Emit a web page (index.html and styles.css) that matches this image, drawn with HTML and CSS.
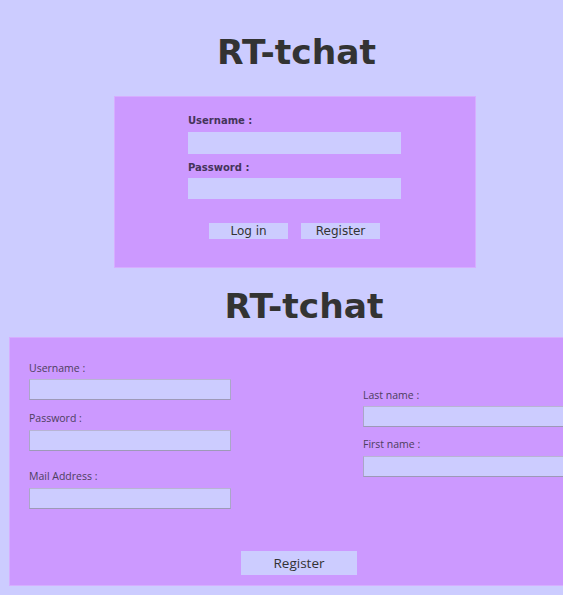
FILE: index.html
```html
<!DOCTYPE html>
<html>
<head>
<meta charset="utf-8">
<title>RT-tchat</title>
<link rel="stylesheet" href="styles.css">
</head>
<body>
<section class="login">
  <h1 class="title title-login">RT-tchat</h1>
  <div class="panel login-panel">
    <div class="login-fields">
      <label class="blabel">Username :</label>
      <div class="linput linput-a"></div>
      <label class="blabel blabel-b">Password :</label>
      <div class="linput linput-b"></div>
    </div>
    <div class="login-buttons">
      <button class="lbtn">Log in</button>
      <button class="lbtn">Register</button>
    </div>
  </div>
</section>
<section class="register">
  <h1 class="title title-reg">RT-tchat</h1>
  <div class="panel reg-panel">
    <div class="reg-grid">
      <div class="reg-col">
        <label class="rlabel">Username :</label>
        <div class="rinput"></div>
        <label class="rlabel rl-pass">Password :</label>
        <div class="rinput"></div>
        <label class="rlabel rl-mail">Mail Address :</label>
        <div class="rinput"></div>
      </div>
      <div class="reg-col reg-col-right">
        <label class="rlabel">Last name :</label>
        <div class="rinput rinput-wide"></div>
        <label class="rlabel rl-first">First name :</label>
        <div class="rinput rinput-wide"></div>
      </div>
    </div>
    <button class="rbtn">Register</button>
  </div>
</section>
</body>
</html>
```

FILE: styles.css
```css
html, body {
  margin: 0;
  padding: 0;
  overflow: hidden;
  background: #ccccff;
}
body {
  width: 563px;
  height: 595px;
  font-family: "DejaVu Sans", sans-serif;
}
.login {
  width: 563px;
  padding-top: 33px;
  height: 252px;
  display: flex;
  flex-direction: column;
  overflow: hidden;
}
.title {
  margin: 0;
  font-family: "DejaVu Sans", sans-serif;
  font-weight: bold;
  font-size: 34.5px;
  line-height: 38px;
  color: #333333;
  text-align: center;
}
.title-login {
  padding-left: 30px;
}
.title-reg {
  padding-left: 45px;
}
.panel {
  box-sizing: border-box;
  background: #cc99ff;
  border: 1px solid #d6adff;
}
.login-panel {
  width: 362px;
  height: 172px;
  margin: 25px 0 0 114px;
  padding: 18px 0 0 73px;
  display: flex;
  flex-direction: column;
  flex-shrink: 0;
}
.login-fields {
  display: flex;
  flex-direction: column;
}
.blabel {
  display: block;
  font-weight: bold;
  font-size: 10px;
  line-height: 12px;
  color: #44345a;
}
.blabel-b {
  margin-top: 8px;
}
.linput {
  width: 213px;
  background: #ccccff;
  margin-top: 5px;
}
.linput-a { height: 22px; }
.linput-b { height: 21px; margin-top: 4px; }
.login-buttons {
  display: flex;
  gap: 13px;
  margin: 24px 0 0 21px;
}
.lbtn {
  width: 79px;
  height: 16px;
  padding: 0;
  border: none;
  background: #ccccff;
  font-family: "DejaVu Sans", sans-serif;
  font-size: 12px;
  line-height: 16px;
  color: #333333;
}
.register {
  width: 563px;
  height: 310px;
  overflow: hidden;
  padding-top: 2px;
  box-sizing: border-box;
}
.reg-panel {
  width: 590px;
  margin: 12px 0 0 9px;
  height: 249px;
  padding: 23px 0 0 19px;
  display: flex;
  flex-direction: column;
}
.reg-grid {
  display: grid;
  grid-template-columns: 202px 1fr;
  column-gap: 132px;
  align-items: start;
}
.reg-col {
  display: flex;
  flex-direction: column;
}
.reg-col-right {
  padding-top: 27px;
}
.rlabel {
  display: block;
  font-family: "Open Sans", sans-serif;
  font-size: 10.5px;
  line-height: 14px;
  color: #4d3e5e;
}
.rl-pass { margin-top: 11px; }
.rl-mail { margin-top: 18px; }
.rl-first { margin-top: 10px; }
.rinput {
  box-sizing: border-box;
  width: 202px;
  height: 21px;
  margin-top: 5px;
  background: #ccccff;
  border: 1px solid #aaa6c8;
  border-bottom-color: #9d99b8;
  border-top-color: #b8b4d4;
}
.reg-col > .rinput:nth-child(2) { margin-top: 4px; }
.rinput-wide {
  width: 230px;
}
.rbtn {
  width: 116px;
  height: 24px;
  margin: 42px 0 0 212px;
  padding: 0;
  border: none;
  background: #ccccff;
  font-family: "Open Sans", sans-serif;
  font-size: 13.5px;
  line-height: 24px;
  color: #333333;
}
```
